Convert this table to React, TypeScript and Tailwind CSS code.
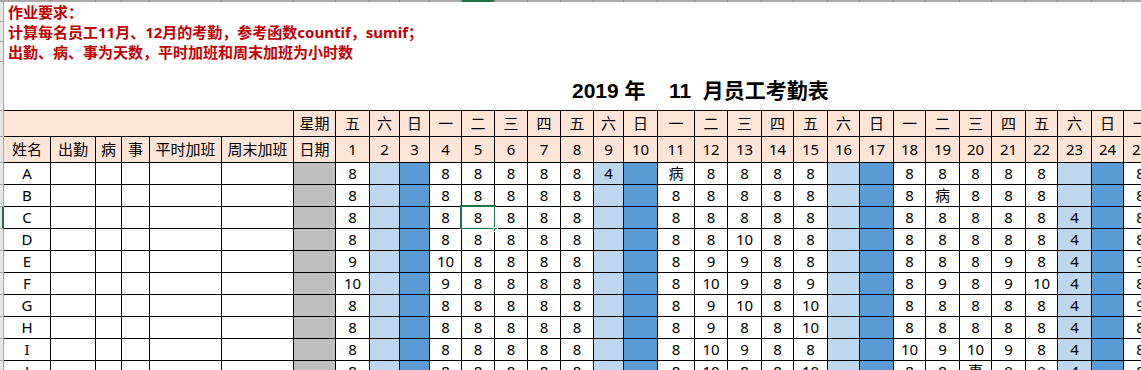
import React from "react";

const weekdays = ["五","六","日","一","二","三","四","五","六","日","一","二","三","四","五","六","日","一","二","三","四","五","六","日","一"];

const rows: [string, string[]][] = [
  ["A", ["8","","","8","8","8","8","8","4","","病","8","8","8","8","","","8","8","8","8","8","","","8"]],
  ["B", ["8","","","8","8","8","8","8","","","8","8","8","8","8","","","8","病","8","8","8","","","8"]],
  ["C", ["8","","","8","8","8","8","8","","","8","8","8","8","8","","","8","8","8","8","8","4","","8"]],
  ["D", ["8","","","8","8","8","8","8","","","8","8","10","8","8","","","8","8","8","8","8","4","","8"]],
  ["E", ["9","","","10","8","8","8","8","","","8","9","9","8","8","","","8","8","8","9","8","4","","9"]],
  ["F", ["10","","","9","8","8","8","8","","","8","10","9","8","9","","","8","9","8","9","10","4","","8"]],
  ["G", ["8","","","8","8","8","8","8","","","8","9","10","8","10","","","8","8","8","8","8","4","","9"]],
  ["H", ["8","","","8","8","8","8","8","","","8","9","8","8","10","","","8","8","8","8","8","4","","8"]],
  ["I", ["8","","","8","8","8","8","8","","","8","10","9","8","8","","","10","9","10","9","8","4","","8"]],
  ["J", ["8","","","8","8","8","8","8","","","8","10","8","8","10","","","8","8","事","9","9","4","","8"]],
];

const SAT = [1, 8, 15, 22];
const SUN = [2, 9, 16, 23];

const GRID =
  "grid w-max grid-cols-[46px_44px_25px_27px_71px_71px_41px_33px_29px_29px_31px_32px_32px_32px_32px_29px_33px_36px_32px_33px_31px_33px_31px_33px_31px_33px_31px_33px_31px_33px_31px_33px]";

function dayBg(i: number) {
  if (SAT.includes(i)) return "bg-[#bdd7ee]";
  if (SUN.includes(i)) return "bg-[#5b9bd5]";
  return "bg-white";
}

const cellFont = "font-['Noto_Sans','Noto_Sans_CJK_SC',sans-serif] text-[15px] text-black";

function LeftStrip() {
  const seg = "w-full shrink-0 border-r border-b border-[#a6a6a6] bg-[#e6e6e6]";
  return (
    <div className="flex w-[4px] shrink-0 flex-col">
      <div className="h-[2px] w-full shrink-0 bg-[#a0a0a0]" />
      <div className={`h-[20px] ${seg}`} />
      <div className={`h-[20px] ${seg}`} />
      <div className={`h-[20px] ${seg}`} />
      <div className={`h-[49px] ${seg}`} />
      <div className={`h-[26px] ${seg}`} />
      <div className={`h-[26px] ${seg}`} />
      {rows.map(([n]) => (
        <div
          key={n}
          className={
            n === "C"
              ? "h-[22px] w-full shrink-0 border-r-2 border-b border-r-[#217346] border-b-[#a6a6a6] bg-[#e6e6e6]"
              : `h-[22px] ${seg}`
          }
        />
      ))}
    </div>
  );
}

export default function App() {
  return (
    <div className="flex h-[370px] w-[1141px] overflow-hidden bg-white">
      <LeftStrip />
      <div className="flex min-w-0 flex-1 flex-col overflow-hidden">
        {/* column header edge */}
        <div className={`${GRID} h-[2px] shrink-0 gap-px bg-[#8a8a8a]`}>
          {Array.from({ length: 32 }).map((_, i) => (
            <div key={i} className={i === 11 ? "bg-[#217346]" : "bg-[#ababab]"} />
          ))}
        </div>

        <div className="flex shrink-0 flex-col pl-[4px] font-['Noto_Sans','Noto_Sans_CJK_SC',sans-serif] text-[15px] font-bold text-[#c00000]">
          <div className="flex h-[20px] items-center leading-none">作业要求：</div>
          <div className="flex h-[20px] items-center leading-none">计算每名员工11月、12月的考勤，参考函数countif，sumif；</div>
          <div className="flex h-[20px] items-center leading-none">出勤、病、事为天数，平时加班和周末加班为小时数</div>
        </div>

        <div className="flex h-[48px] shrink-0 items-end pb-[6px] pl-[568px]">
          <span className="whitespace-pre font-['Liberation_Sans','Noto_Sans_CJK_SC',sans-serif] text-[21px] font-bold leading-[26px] text-black">
            2019 年    11  月员工考勤表
          </span>
        </div>

        <div className={`${GRID} shrink-0 gap-px bg-black pt-px grid-rows-[25px_25px_repeat(10,21px)] ${cellFont}`}>
          {/* header row 1 */}
          <div className="col-span-6 bg-[#fce4d6]" />
          <div className="flex items-center justify-center bg-[#fce4d6] leading-none">星期</div>
          {weekdays.map((w, i) => (
            <div key={`w${i}`} className="flex items-center justify-center bg-[#fce4d6] leading-none">
              {w}
            </div>
          ))}
          {/* header row 2 */}
          {["姓名", "出勤", "病", "事", "平时加班", "周末加班", "日期"].map((h) => (
            <div key={h} className="flex items-center justify-center bg-[#fce4d6] leading-none whitespace-nowrap">
              {h}
            </div>
          ))}
          {weekdays.map((_, i) => (
            <div key={`d${i}`} className="flex items-center justify-center bg-[#fce4d6] leading-none">
              {i + 1}
            </div>
          ))}
          {/* data rows */}
          {rows.map(([name, vals]) => (
            <React.Fragment key={name}>
              <div className="flex items-center justify-center bg-white leading-none">{name}</div>
              <div className="bg-white" />
              <div className="bg-white" />
              <div className="bg-white" />
              <div className="bg-white" />
              <div className="bg-white" />
              <div className="bg-[#bfbfbf]" />
              {vals.map((v, i) => (
                <div
                  key={i}
                  className={`relative flex items-center justify-center leading-none ${dayBg(i)}`}
                >
                  {v}
                  {name === "C" && i === 4 && (
                    <div className="pointer-events-none absolute -top-[2px] -left-[2px] -right-[2px] -bottom-[2px] border-2 border-[#217346]">
                      <div className="absolute -right-[4px] -bottom-[4px] h-[5px] w-[5px] border border-white bg-[#217346]" />
                    </div>
                  )}
                </div>
              ))}
            </React.Fragment>
          ))}
        </div>
      </div>
    </div>
  );
}
